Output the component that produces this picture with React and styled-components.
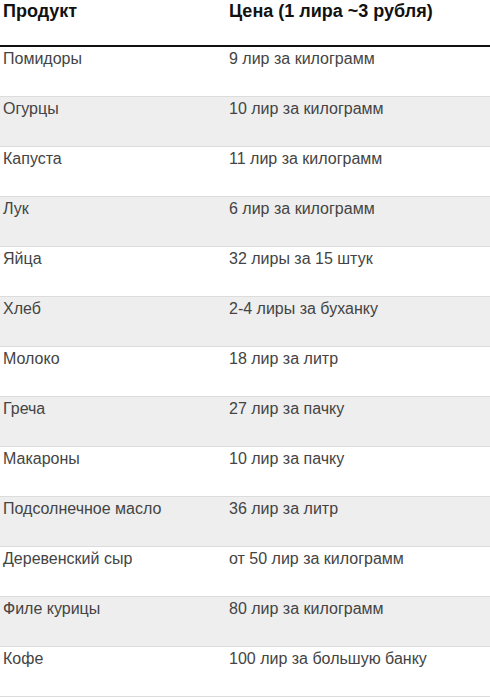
import styled, { createGlobalStyle } from "styled-components";

const GlobalStyle = createGlobalStyle`
  body {
    margin: 0;
    background: #ffffff;
    font-family: "Liberation Sans", Arial, sans-serif;
  }
`;

const Table = styled.div`
  display: flex;
  flex-direction: column;
  width: 490px;
`;

const Row = styled.div`
  display: grid;
  grid-template-columns: 226px 1fr;
  height: ${(p) => (p.$head ? "47px" : "50px")};
  box-sizing: border-box;
  border-bottom: ${(p) => (p.$head ? "2px solid #111111" : "1px solid #dcdcdc")};
  background: ${(p) => (p.$striped ? "#eeeeee" : "#ffffff")};
`;

const Cell = styled.div`
  padding: ${(p) => (p.$head ? "0 3px" : "2px 3px 0")};
  font-size: ${(p) => (p.$head ? "18px" : "16px")};
  font-weight: ${(p) => (p.$head ? 700 : 400)};
  line-height: ${(p) => (p.$head ? "22px" : "20px")};
  color: ${(p) => (p.$head ? "#111111" : "#444444")};
`;

const items = [
  ["Помидоры", "9 лир за килограмм"],
  ["Огурцы", "10 лир за килограмм"],
  ["Капуста", "11 лир за килограмм"],
  ["Лук", "6 лир за килограмм"],
  ["Яйца", "32 лиры за 15 штук"],
  ["Хлеб", "2-4 лиры за буханку"],
  ["Молоко", "18 лир за литр"],
  ["Греча", "27 лир за пачку"],
  ["Макароны", "10 лир за пачку"],
  ["Подсолнечное масло", "36 лир за литр"],
  ["Деревенский сыр", "от 50 лир за килограмм"],
  ["Филе курицы", "80 лир за килограмм"],
  ["Кофе", "100 лир за большую банку"],
];

export default function App() {
  return (
    <>
      <GlobalStyle />
      <Table>
        <Row $head>
          <Cell $head>Продукт</Cell>
          <Cell $head>Цена (1 лира ~3 рубля)</Cell>
        </Row>
        {items.map(([name, price], i) => (
          <Row key={name} $striped={i % 2 === 1}>
            <Cell>{name}</Cell>
            <Cell>{price}</Cell>
          </Row>
        ))}
      </Table>
    </>
  );
}
